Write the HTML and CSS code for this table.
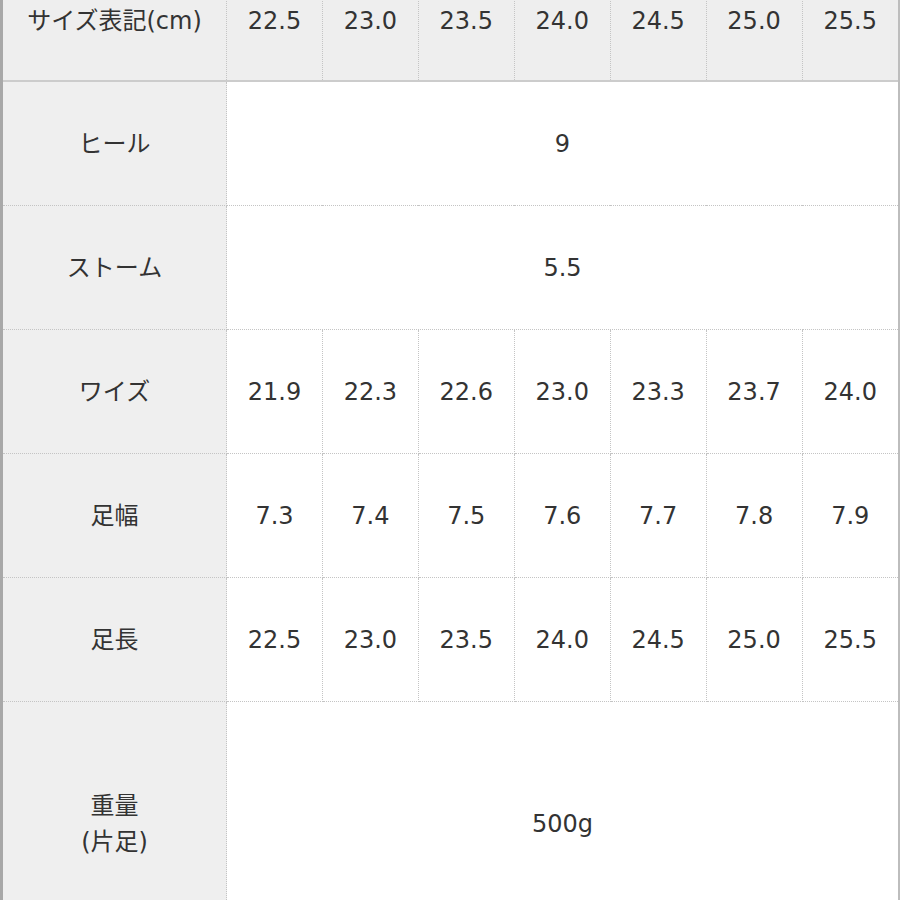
FILE: index.html
```html
<!DOCTYPE html>
<html lang="ja">
<head>
<meta charset="utf-8">
<link rel="stylesheet" href="styles.css">
</head>
<body>
<div class="frame">
<table class="size">
  <tr class="head">
    <th class="label">サイズ表記(cm)</th>
    <td>22.5</td><td>23.0</td><td>23.5</td><td>24.0</td><td>24.5</td><td>25.0</td><td>25.5</td>
  </tr>
  <tr>
    <th class="label">ヒール</th>
    <td colspan="7">9</td>
  </tr>
  <tr>
    <th class="label">ストーム</th>
    <td colspan="7">5.5</td>
  </tr>
  <tr>
    <th class="label">ワイズ</th>
    <td>21.9</td><td>22.3</td><td>22.6</td><td>23.0</td><td>23.3</td><td>23.7</td><td>24.0</td>
  </tr>
  <tr>
    <th class="label">足幅</th>
    <td>7.3</td><td>7.4</td><td>7.5</td><td>7.6</td><td>7.7</td><td>7.8</td><td>7.9</td>
  </tr>
  <tr>
    <th class="label">足長</th>
    <td>22.5</td><td>23.0</td><td>23.5</td><td>24.0</td><td>24.5</td><td>25.0</td><td>25.5</td>
  </tr>
  <tr class="tall">
    <th class="label">重量<br>(片足)</th>
    <td colspan="7">500g</td>
  </tr>
</table>
</div>
</body>
</html>
```

FILE: styles.css
```css
html, body {
  margin: 0;
  padding: 0;
  background: #ffffff;
  overflow: hidden;
}

.frame {
  width: 895px;
  margin-top: -38px;
  border-left: 3px solid #a8a8a8;
  border-right: 2px solid #bdbdbd;
}

.size {
  width: 895px;
  border-collapse: collapse;
  table-layout: fixed;
  font-family: "DejaVu Sans", "Noto Sans CJK JP", sans-serif;
  font-size: 24px;
  color: #333333;
}

.size th,
.size td {
  height: 123px;
  padding: 0;
  text-align: center;
  vertical-align: middle;
  font-weight: normal;
  border: 1px dotted #c4c4c4;
  background: #ffffff;
}

.size tr:first-child th,
.size tr:first-child td {
  border-top: none;
}

.size th.label {
  width: 223px;
  background: #efefef;
  border-left: none;
  line-height: 1.5;
}

.size td:last-child {
  border-right: none;
}

.size .head th,
.size .head td {
  height: 118px;
  background: #eeeeee;
  border-bottom: 2px solid #cccccc;
}

.size .tall th,
.size .tall td {
  height: 243px;
}
```
